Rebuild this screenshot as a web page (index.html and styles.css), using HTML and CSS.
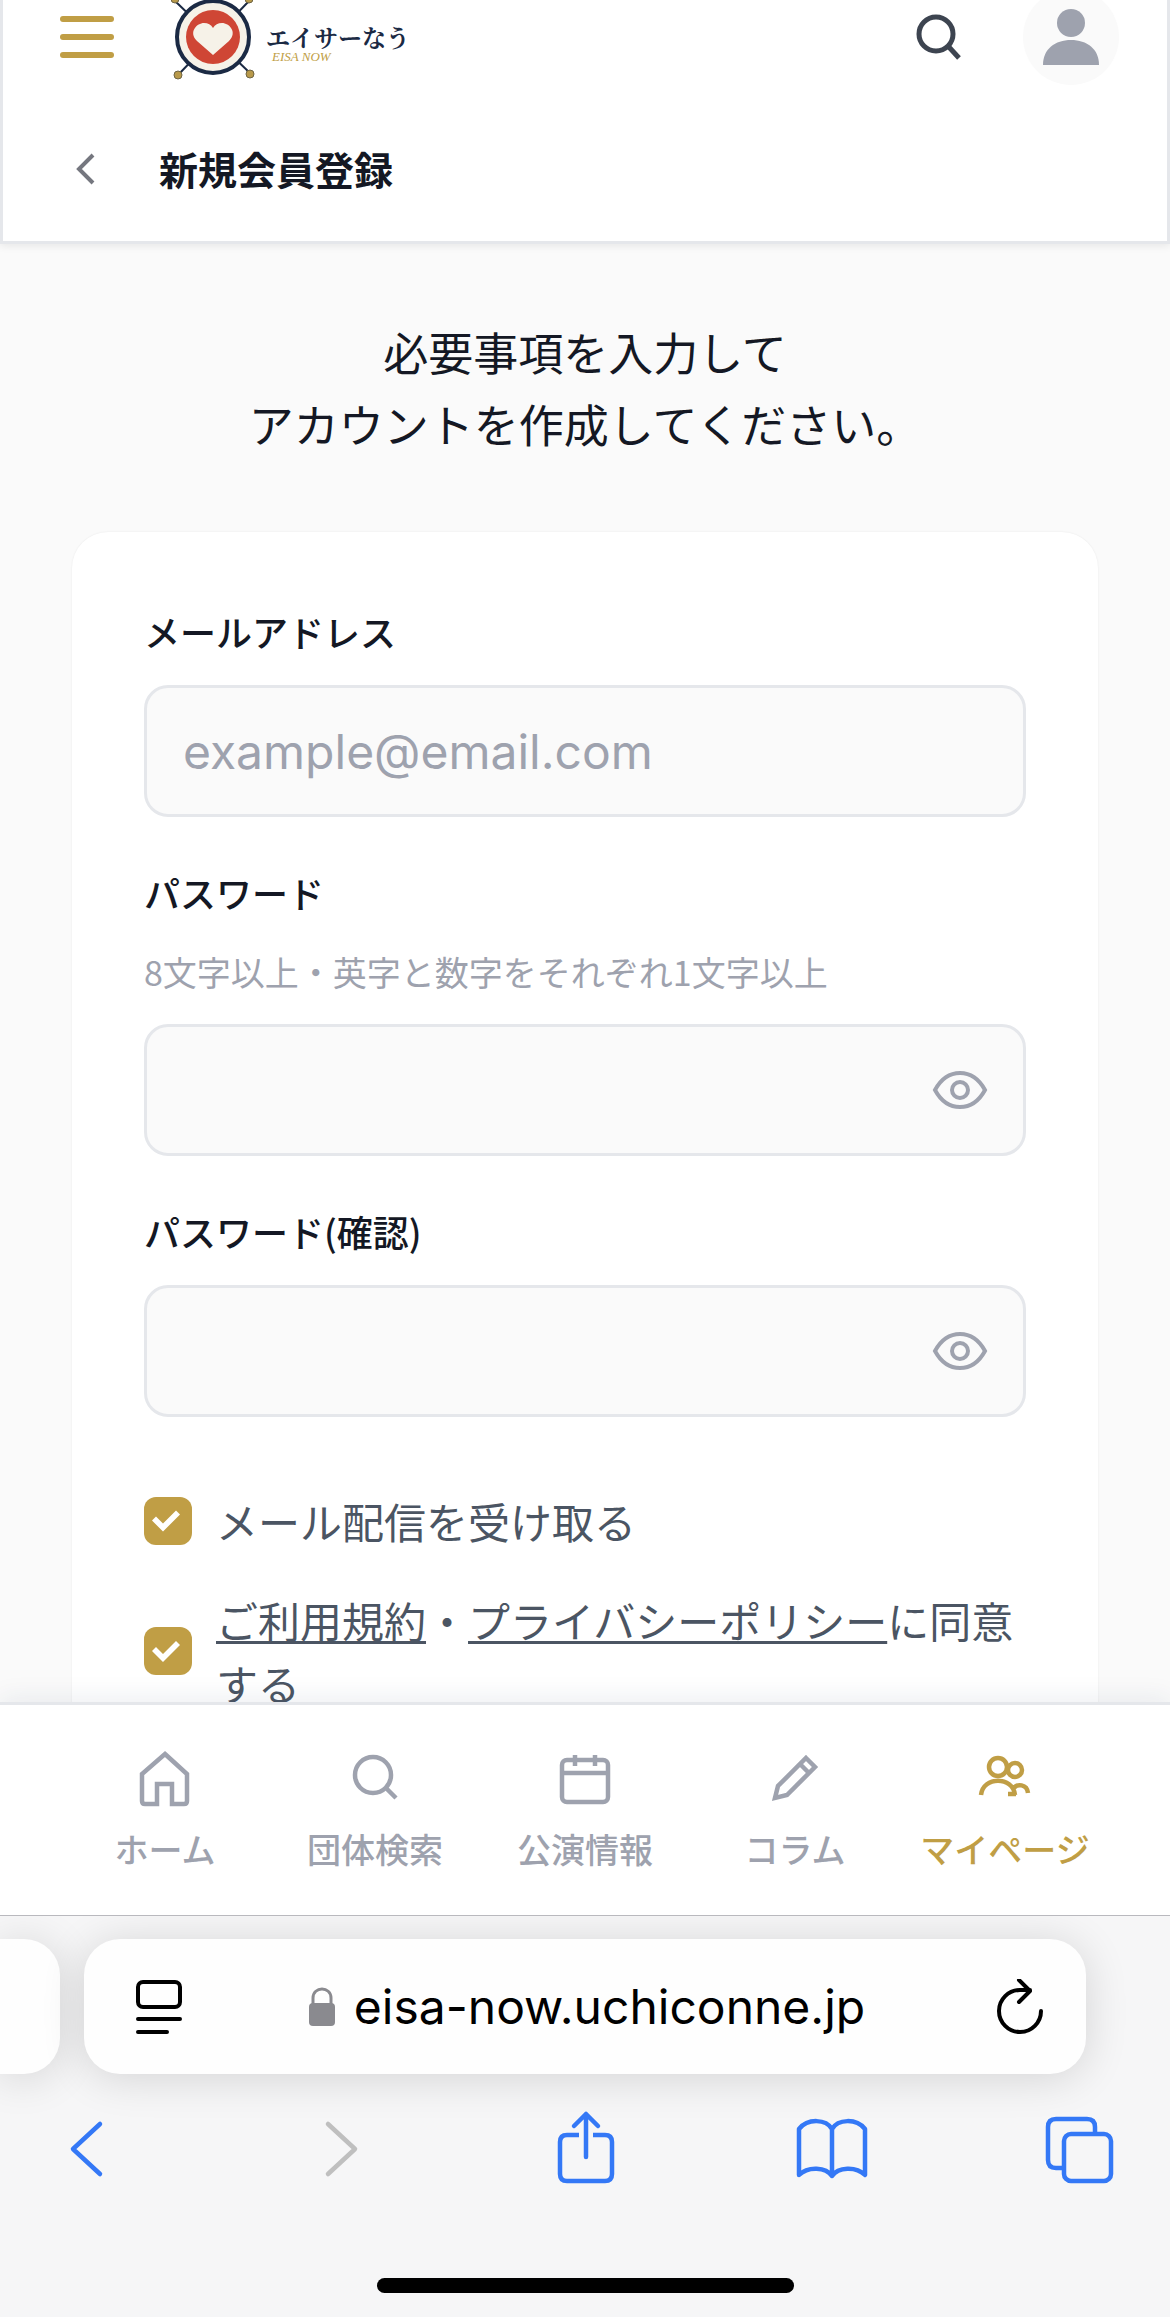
FILE: index.html
```html
<!DOCTYPE html>
<html lang="ja">
<head>
    <meta charset="UTF-8">
    <meta name="viewport" content="width=device-width, initial-scale=1.0">
    <title>新規会員登録 | エイサーなう</title>
    <link rel="stylesheet" href="styles.css">
</head>
<body>
    <header class="header">
        <div class="header-top">
            <button type="button" class="menu-button" aria-label="メニュー">
                <span></span>
                <span></span>
                <span></span>
            </button>
            <a href="#" class="logo">
                <svg class="logo-mark" viewBox="0 0 84 96" aria-hidden="true">
                    <g stroke="#1b2a44" stroke-width="2">
                        <path d="M4 12L80 85M78 12L7 86"/>
                    </g>
                    <g fill="#b8994a" stroke="#6e6444" stroke-width="1">
                        <circle cx="4" cy="10" r="4"/>
                        <circle cx="78" cy="10" r="4"/>
                        <circle cx="7" cy="86" r="4"/>
                        <circle cx="79" cy="85" r="4"/>
                    </g>
                    <circle cx="42" cy="48" r="36" fill="#f6f2e8" stroke="#1b2a44" stroke-width="4"/>
                    <circle cx="42" cy="48" r="27" fill="#cf4635"/>
                    <path fill="#f6f2e8" d="M42 66L26 52C17 43 26 34 33 34Q39 34 42 39Q45 34 51 34C58 34 67 43 58 52Z"/>
                </svg>
                <span class="logo-text">
                    <span class="logo-name">エイサーなう</span>
                    <span class="logo-sub">EISA NOW</span>
                </span>
            </a>
            <button type="button" class="icon-button search-button" aria-label="検索">
                <svg width="48" height="48" viewBox="0 0 48 48" fill="none" stroke="#3d4450" stroke-width="5">
                    <circle cx="22" cy="21" r="17"/>
                    <path d="M34 33L45 45"/>
                </svg>
            </button>
            <a href="#" class="avatar" aria-label="マイページ">
                <svg width="56" height="56" viewBox="0 0 56 56" fill="#9ea2ae">
                    <circle cx="28" cy="14" r="14"/>
                    <path d="M0 56C0 40 12 31 28 31S56 40 56 56Z"/>
                </svg>
            </a>
        </div>
        <div class="title-bar">
            <button type="button" class="icon-button" aria-label="戻る">
                <svg width="24" height="36" viewBox="0 0 24 36" fill="none" stroke="#75777f" stroke-width="4">
                    <path d="M20 5L6 19L20 33"/>
                </svg>
            </button>
            <h1>新規会員登録</h1>
        </div>
    </header>

    <main class="content">
        <p class="lead">必要事項を入力して<br>アカウントを作成してください。</p>

        <form class="card" id="registerForm">
            <div class="form-group">
                <label for="email">メールアドレス</label>
                <input type="email" id="email" name="email" placeholder="example@email.com">
            </div>
            <div class="form-group">
                <label for="password">パスワード</label>
                <p class="hint">8文字以上・英字と数字をそれぞれ1文字以上</p>
                <div class="password-box">
                    <input type="password" id="password" name="password">
                    <button type="button" class="eye-button" aria-label="パスワードを表示">
                        <svg width="56" height="40" viewBox="0 0 56 40" fill="none" stroke="#9ea2ae" stroke-width="4">
                            <path d="M3 20C9 9 17 3 28 3S47 9 53 20C47 31 39 37 28 37S9 31 3 20Z"/>
                            <circle cx="28" cy="20" r="8"/>
                        </svg>
                    </button>
                </div>
            </div>
            <div class="form-group">
                <label for="passwordConfirm">パスワード(確認)</label>
                <div class="password-box">
                    <input type="password" id="passwordConfirm" name="passwordConfirm">
                    <button type="button" class="eye-button" aria-label="パスワードを表示">
                        <svg width="56" height="40" viewBox="0 0 56 40" fill="none" stroke="#9ea2ae" stroke-width="4">
                            <path d="M3 20C9 9 17 3 28 3S47 9 53 20C47 31 39 37 28 37S9 31 3 20Z"/>
                            <circle cx="28" cy="20" r="8"/>
                        </svg>
                    </button>
                </div>
            </div>
            <div class="check-list">
                <div class="check-row">
                    <input type="checkbox" id="newsletter" name="newsletter" checked>
                    <label for="newsletter">メール配信を受け取る</label>
                </div>
                <div class="check-row">
                    <input type="checkbox" id="agree" name="agree" checked>
                    <label for="agree"><a href="#">ご利用規約</a>・<a href="#">プライバシーポリシー</a>に同意する</label>
                </div>
            </div>
        </form>
    </main>

    <nav class="tab-bar">
        <a href="#" class="tab">
            <svg width="60" height="60" viewBox="0 0 60 60" fill="none" stroke="currentColor" stroke-width="4.5">
                <path d="M30 7L52 27V54Q52 57 49 57H37V37H22V57H10Q7 57 7 54V27Z"/>
            </svg>
            <span>ホーム</span>
        </a>
        <a href="#" class="tab">
            <svg width="60" height="60" viewBox="0 0 60 60" fill="none" stroke="currentColor" stroke-width="4.5">
                <circle cx="28" cy="28" r="18"/>
                <path d="M41 41L51 51"/>
            </svg>
            <span>団体検索</span>
        </a>
        <a href="#" class="tab">
            <svg width="60" height="60" viewBox="0 0 60 60" fill="none" stroke="currentColor" stroke-width="4.5">
                <rect x="7" y="13" width="46" height="42" rx="5"/>
                <path d="M7 26H53M20 8V19M40 8V19"/>
            </svg>
            <span>公演情報</span>
        </a>
        <a href="#" class="tab">
            <svg width="60" height="60" viewBox="0 0 60 60" fill="none" stroke="currentColor" stroke-width="4.5">
                <path d="M41 11L50 20L22 48L10 51L13 39ZM35 17L44 26"/>
            </svg>
            <span>コラム</span>
        </a>
        <a href="#" class="tab active">
            <svg width="60" height="60" viewBox="0 0 60 60" fill="none" stroke="currentColor" stroke-width="4.5">
                <circle cx="23" cy="20" r="9"/>
                <circle cx="40" cy="23" r="7"/>
                <path d="M6 48C8 29 38 29 40 48M33 47H41M38 42C42 36 52 37 53 46"/>
            </svg>
            <span>マイページ</span>
        </a>
    </nav>

    <footer class="browser">
        <div class="address-row">
            <div class="address-prev"></div>
            <div class="address">
                <button type="button" class="icon-button" aria-label="ページ設定">
                    <svg width="48" height="56" viewBox="0 0 48 56" fill="none" stroke="#000" stroke-width="4" stroke-linecap="round">
                        <rect x="3" y="3" width="42" height="25" rx="5"/>
                        <path d="M3 40H45M3 53H32"/>
                    </svg>
                </button>
                <div class="url">
                    <svg width="28" height="40" viewBox="0 0 28 40">
                        <path d="M5 17V11C5 -1 23 -1 23 11V17" fill="none" stroke="#8a8a8f" stroke-width="3"/>
                        <rect x="1" y="16" width="26" height="23" rx="4" fill="#8a8a8f"/>
                    </svg>
                    <span>eisa-now.uchiconne.jp</span>
                </div>
                <button type="button" class="icon-button" aria-label="再読み込み">
                    <svg width="48" height="56" viewBox="0 0 48 56" fill="none" stroke="#000" stroke-width="4" stroke-linecap="round" stroke-linejoin="round">
                        <path d="M45 32A21 21 0 1 1 24 11H34M23 1L34 12L23 23"/>
                    </svg>
                </button>
            </div>
        </div>
        <div class="toolbar">
            <button type="button" class="icon-button" aria-label="前のページ">
                <svg width="72" height="76" viewBox="0 0 72 76" fill="none" stroke="currentColor" stroke-width="4.5" stroke-linecap="round" stroke-linejoin="round">
                    <path d="M49 14L22 39L49 64"/>
                </svg>
            </button>
            <button type="button" class="icon-button" aria-label="次のページ" disabled>
                <svg width="72" height="76" viewBox="0 0 72 76" fill="none" stroke="currentColor" stroke-width="4.5" stroke-linecap="round" stroke-linejoin="round">
                    <path d="M29 14L56 39L29 64"/>
                </svg>
            </button>
            <button type="button" class="icon-button" aria-label="共有">
                <svg width="72" height="76" viewBox="0 0 72 76" fill="none" stroke="currentColor" stroke-width="4.5" stroke-linecap="round" stroke-linejoin="round">
                    <path stroke-linecap="butt" d="M31 25H19Q12 25 12 32V64Q12 71 19 71H57Q64 71 64 64V32Q64 25 57 25H45"/>
                    <path d="M38 47V4M26 16L38 4L50 16"/>
                </svg>
            </button>
            <button type="button" class="icon-button" aria-label="ブックマーク">
                <svg width="72" height="76" viewBox="0 0 72 76" fill="none" stroke="currentColor" stroke-width="4.5" stroke-linecap="round" stroke-linejoin="round">
                    <path d="M36 19C30 9 12 8 3 19V65C12 56 30 57 36 66C42 57 60 56 69 65V19C60 8 42 9 36 19V66"/>
                </svg>
            </button>
            <button type="button" class="icon-button" aria-label="タブ一覧">
                <svg width="72" height="76" viewBox="0 0 72 76" fill="none" stroke="currentColor" stroke-width="4.5" stroke-linejoin="round">
                    <rect x="20" y="24" width="47" height="47" rx="7"/>
                    <path d="M20 58H12Q4 58 4 50V17Q4 9 12 9H43Q51 9 51 17V24"/>
                </svg>
            </button>
        </div>
        <div class="home-indicator"></div>
    </footer>
</body>
</html>
```
FILE: styles.css
```css
* {
    box-sizing: border-box;
}

body {
    font-family: "Noto Sans CJK JP", sans-serif;
    background-color: #fafafa;
    color: #141824;
    margin: 0;
    height: 100vh;
    display: flex;
    flex-direction: column;
    overflow: hidden;
}

h1, p {
    margin: 0;
}

button {
    padding: 0;
    border: none;
    background: none;
    color: inherit;
    font: inherit;
}

svg {
    display: block;
    flex-shrink: 0;
}

/* Header */
.header {
    position: relative;
    z-index: 1;
    margin-top: -11px;
    background: #fff;
    border: 3px solid #e5e7eb;
    border-top: none;
    box-shadow: 0 2px 8px rgba(0, 0, 0, 0.08);
}

.header-top {
    display: flex;
    align-items: center;
    padding: 0 48px 0 57px;
}

.menu-button {
    display: flex;
    flex-direction: column;
    gap: 12px;
    width: 54px;
}

.menu-button span {
    height: 6px;
    border-radius: 3px;
    background-color: #c09e45;
}

.logo {
    display: flex;
    align-items: center;
    gap: 11px;
    margin-left: 57px;
    color: #1b2a44;
    text-decoration: none;
}

.logo-mark {
    width: 84px;
    height: 96px;
}

.logo-text {
    display: flex;
    flex-direction: column;
    padding-top: 12px;
}

.logo-name {
    font-family: "Noto Serif CJK JP", "Noto Sans CJK JP", serif;
    font-size: 24px;
    font-weight: 700;
    line-height: 28px;
}

.logo-sub {
    margin-left: 6px;
    font-family: "Liberation Serif", serif;
    font-size: 13px;
    font-style: italic;
    line-height: 12px;
    color: #c09e45;
}

.search-button {
    margin-left: auto;
}

.avatar {
    display: flex;
    align-items: center;
    justify-content: center;
    width: 96px;
    height: 96px;
    margin-left: 61px;
    border-radius: 50%;
    background-color: #fafafa;
}

.title-bar {
    display: flex;
    align-items: center;
    gap: 62px;
    padding: 53px 70px 43px;
}

.title-bar h1 {
    font-size: 39px;
    font-weight: 700;
    line-height: 60px;
}

/* Form */
.content {
    flex: 1;
    min-height: 0;
    overflow: hidden;
    padding: 72px 72px 0;
}

.lead {
    font-size: 45px;
    line-height: 72px;
    text-align: center;
}

.card {
    margin-top: 72px;
    padding: 72px;
    background: #fff;
    border-radius: 36px;
    box-shadow: 0 0 2px rgba(0, 0, 0, 0.08);
}

.form-group {
    margin-bottom: 48px;
}

.form-group label {
    display: block;
    margin-bottom: 27px;
    font-size: 36px;
    font-weight: 500;
    line-height: 54px;
}

.hint {
    margin-bottom: 27px;
    font-size: 34px;
    line-height: 51px;
    color: #9ea2ae;
}

.form-group input {
    display: block;
    width: 100%;
    height: 132px;
    padding: 0 36px;
    border: 3px solid #e5e7eb;
    border-radius: 24px;
    background-color: #fafafa;
    color: inherit;
    font-family: Inter, sans-serif;
    font-size: 48px;
}

.form-group input::placeholder {
    color: #9ea2ae;
}

.password-box {
    position: relative;
}

.password-box input {
    padding-right: 120px;
}

.eye-button {
    position: absolute;
    top: 46px;
    right: 38px;
}

.check-list {
    display: flex;
    flex-direction: column;
    gap: 36px;
    padding-top: 24px;
}

.check-row {
    display: flex;
    align-items: center;
    gap: 24px;
    font-size: 42px;
    line-height: 63px;
    color: #4b5563;
}

.check-row a {
    color: inherit;
    text-underline-offset: 3px;
    text-decoration-thickness: 3px;
    text-decoration-skip-ink: none;
}

.check-row input {
    appearance: none;
    flex-shrink: 0;
    width: 48px;
    height: 48px;
    margin: 0;
    border-radius: 12px;
    background-color: #c09e45;
}

.check-row input:checked::before {
    content: "";
    display: block;
    width: 48px;
    height: 48px;
    background-color: #fff;
    clip-path: polygon(8px 24px, 12px 20px, 19px 27px, 32px 14px, 36px 18px, 19px 35px);
}

/* Bottom navigation */
.tab-bar {
    position: relative;
    z-index: 1;
    display: flex;
    padding: 42px 60px 39px;
    background: #fff;
    border-top: 3px solid #e5e7eb;
    box-shadow: 0 -4px 24px rgba(30, 50, 90, 0.08);
}

.tab {
    flex: 1;
    display: flex;
    flex-direction: column;
    align-items: center;
    gap: 15px;
    color: #9ea2ae;
    font-size: 34px;
    font-weight: 500;
    line-height: 54px;
    text-decoration: none;
}

.tab.active {
    color: #c09e45;
}

/* Browser bar */
.browser {
    position: relative;
    z-index: 2;
    padding: 23px 0 24px;
    background-color: #f6f6f7;
    border-top: 1px solid #b9b9be;
    overflow: hidden;
}

.address-row {
    display: flex;
    gap: 24px;
}

.address-prev,
.address {
    height: 135px;
    background: #fefefe;
    box-shadow: 0 4px 44px rgba(0, 0, 0, 0.14);
}

.address-prev {
    width: 60px;
    border-radius: 0 36px 36px 0;
}

.address {
    flex: 1;
    display: flex;
    align-items: center;
    justify-content: space-between;
    margin-right: 84px;
    padding: 0 42px 0 51px;
    border-radius: 36px;
}

.url {
    display: flex;
    align-items: center;
    gap: 18px;
    margin-right: 6px;
    color: #000;
    font-family: Inter, sans-serif;
    font-size: 48px;
    line-height: 60px;
}

.toolbar {
    display: flex;
    justify-content: space-between;
    padding: 36px 54px 0 51px;
    color: #3478f6;
}

.toolbar button:disabled {
    color: #bfbfbf;
}

.home-indicator {
    width: 417px;
    height: 15px;
    margin: 92px auto 0;
    border-radius: 8px;
    background-color: #000;
}
```
